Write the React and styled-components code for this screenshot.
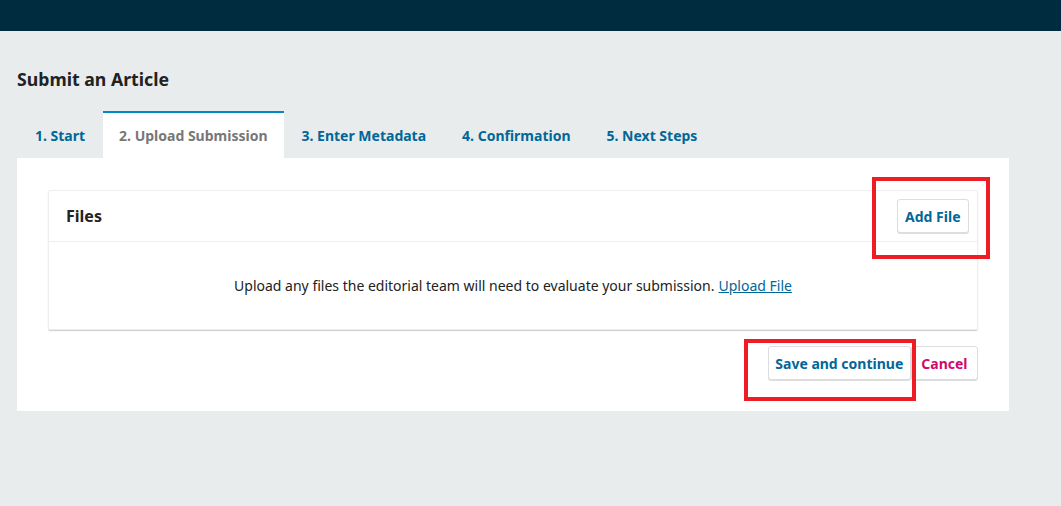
import React from "react";
import styled, { createGlobalStyle } from "styled-components";

const Global = createGlobalStyle`
  html, body { margin: 0; padding: 0; }
  body {
    background: #e9eced;
    font-family: "Noto Sans", "Open Sans", sans-serif;
    color: #222;
  }
`;

const Page = styled.div`
  position: relative;
  width: 1061px;
  height: 506px;
  overflow: hidden;
  background: #e9eced;
`;

const TopBar = styled.div`
  height: 31px;
  background: #002c40;
`;

const Main = styled.div`
  padding: 35px 52px 0 17px;
`;

const Title = styled.h1`
  margin: 0 0 19px;
  font-size: 17.7px;
  font-weight: 700;
  line-height: 26px;
  color: #222;
`;

const Tabs = styled.div`
  display: flex;
  height: 47px;
`;

const Tab = styled.div`
  display: flex;
  align-items: center;
  padding: 0 ${({ active }) => (active ? 16 : 18)}px;
  font-size: 14px;
  font-weight: 700;
  color: ${({ active }) => (active ? "#777" : "#006798")};
  background: ${({ active }) => (active ? "#fff" : "transparent")};
  border-top: 2px solid ${({ active }) => (active ? "#008acb" : "transparent")};
  box-sizing: border-box;
`;

const Panel = styled.div`
  background: #fff;
  padding: 32px 31px 31px;
`;

const Card = styled.div`
  border: 1px solid #eee;
  box-shadow: 0 1px 1px #ccc;
  border-radius: 2px;
`;

const CardHead = styled.div`
  display: flex;
  align-items: center;
  justify-content: space-between;
  height: 50px;
  padding: 0 8px 0 17px;
  border-bottom: 1px solid #eee;
`;

const CardTitle = styled.div`
  font-size: 16px;
  font-weight: 700;
  color: #222;
`;

const CardBody = styled.div`
  height: 87px;
  display: flex;
  align-items: center;
  justify-content: center;
  font-size: 14px;
  color: #222;
`;

const Link = styled.a`
  color: #006798;
  text-decoration: underline;
  margin-left: 4px;
  cursor: pointer;
`;

const Button = styled.button`
  font-family: inherit;
  font-size: 14px;
  font-weight: 700;
  height: 34px;
  padding: 0 ${({ pad }) => pad || 8}px;
  background: #fff;
  color: ${({ danger }) => (danger ? "#d00a6c" : "#006798")};
  border: 1px solid #ddd;
  border-radius: 3px;
  box-shadow: 0 1px 0 #ddd;
  cursor: pointer;
`;

const Actions = styled.div`
  display: flex;
  justify-content: flex-end;
  margin-top: 16px;
`;

const Mark = styled.div`
  position: absolute;
  border: 4px solid #ee1c25;
  box-sizing: border-box;
  pointer-events: none;
`;

export default function App() {
  return (
    <Page>
      <Global />
      <TopBar />
      <Main>
        <Title>Submit an Article</Title>
        <Tabs>
          <Tab>1. Start</Tab>
          <Tab active>2. Upload Submission</Tab>
          <Tab>3. Enter Metadata</Tab>
          <Tab>4. Confirmation</Tab>
          <Tab>5. Next Steps</Tab>
        </Tabs>
        <Panel>
          <Card>
            <CardHead>
              <CardTitle>Files</CardTitle>
              <Button pad={7.5}>Add File</Button>
            </CardHead>
            <CardBody>
              Upload any files the editorial team will need to evaluate your submission.
              <Link>Upload File</Link>
            </CardBody>
          </Card>
          <Actions>
            <Button pad={6.5}>Save and continue</Button>
            <Button danger pad={9.5}>Cancel</Button>
          </Actions>
        </Panel>
      </Main>
      <Mark style={{ left: 872, top: 177, width: 118, height: 82 }} />
      <Mark style={{ left: 744, top: 339, width: 172, height: 62 }} />
    </Page>
  );
}
